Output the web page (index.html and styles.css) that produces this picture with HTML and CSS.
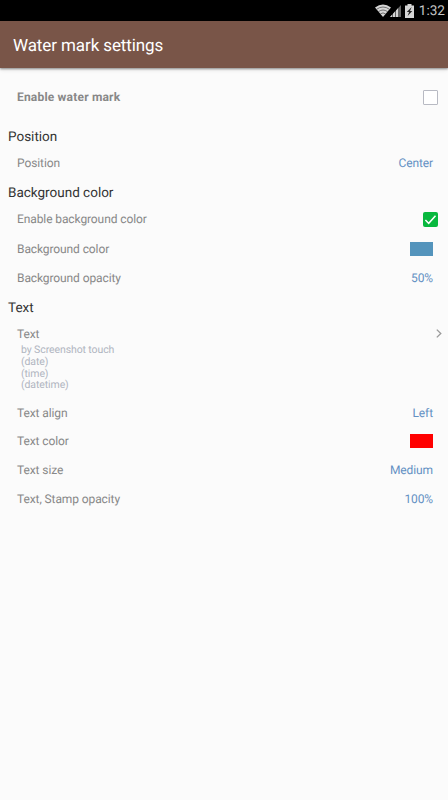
FILE: index.html
```html
<!DOCTYPE html>
<html lang="en">
<head>
<meta charset="utf-8">
<title>Water mark settings</title>
<link rel="stylesheet" href="styles.css">
</head>
<body>
<div class="status">
  <svg class="wifi" width="16" height="13" viewBox="0 0 16 13"><path d="M0 3.6Q8-2.8 16 3.6L8 13Z" fill="#d6d6d6"/><path d="M1.4 5.4Q8 .6 14.6 5.4M3.4 7.7Q8 4.3 12.6 7.7M5.4 9.9Q8 7.9 10.6 9.9" fill="none" stroke="#444" stroke-width=".7"/></svg>
  <svg class="signal" width="11" height="12" viewBox="0 0 11 12"><path d="M0 12L11 0V12Z" fill="#666"/><path d="M0 12L2 9.8V12ZM3 12V8.7L5 6.5V12ZM6 12V5.5L8 3.3V12Z" fill="#d6d6d6"/></svg>
  <svg class="battery" width="9" height="14" viewBox="0 0 9 14"><path d="M2.5 0h4v1.5H9V14H0V1.5h2.5Z" fill="#d6d6d6"/><path d="M6.7 3L1.8 8h2.3L2.6 12 7.3 7H5Z" fill="#222"/></svg>
  <span class="clock">1:32</span>
</div>
<header class="bar"><h1>Water mark settings</h1></header>
<main>
  <div class="row master"><span class="label">Enable water mark</span><span class="check"></span></div>
  <h2 class="first">Position</h2>
  <div class="row tall"><span class="label">Position</span><span class="value">Center</span></div>
  <h2>Background color</h2>
  <div class="row short"><span class="label">Enable background color</span><span class="check on"><svg width="15" height="15" viewBox="0 0 15 15"><path d="M2.4 8L5.7 11.3L12.5 3.7" fill="none" stroke="#fff" stroke-width="1.5"/></svg></span></div>
  <div class="row tall"><span class="label">Background color</span><span class="swatch blue"></span></div>
  <div class="row opacity"><span class="label">Background opacity</span><span class="value">50%</span></div>
  <h2 class="text-head">Text</h2>
  <div class="row text-row"><span class="label">Text</span><svg class="chevron" width="6" height="9" viewBox="0 0 6 9"><path d="M.8.6L4.8 4.5L.8 8.4" fill="none" stroke="#999" stroke-width="1.3"/></svg></div>
  <div class="detail"><div>by Screenshot touch</div><div>(date)</div><div>(time)</div><div>(datetime)</div></div>
  <div class="row"><span class="label">Text align</span><span class="value">Left</span></div>
  <div class="row"><span class="label">Text color</span><span class="swatch red"></span></div>
  <div class="row"><span class="label">Text size</span><span class="value">Medium</span></div>
  <div class="row"><span class="label">Text, Stamp opacity</span><span class="value">100%</span></div>
</main>
</body>
</html>
```
FILE: styles.css
```css
* { box-sizing: border-box; }
body { margin: 0; height: 800px; overflow: hidden; background: #fbfbfb; font-family: Roboto, sans-serif; text-rendering: geometricPrecision; }
.status { height: 21px; background: #000; display: flex; align-items: center; justify-content: flex-end; padding-right: 3px; }
.signal { margin: 1px 0 0 -1px; }
.battery { margin: 0 5px 0 4px; }
.clock { color: #c6c6c6; font-size: 13.6px; line-height: 20px; padding-top: 1px; }
.bar { height: 47px; background: #795548; display: flex; align-items: center; padding: 2px 13px 0; box-shadow: 0 1px 2px rgba(0,0,0,.4), 0 2px 4px rgba(0,0,0,.1); }
h1 { margin: 0; color: #fff; font-size: 17px; font-weight: 400; letter-spacing: -.1px; }
h2 { margin: 0; padding: 1px 0 0 8px; height: 28px; display: flex; align-items: center; color: #333; font-size: 13.5px; font-weight: 400; }
h2.first { height: 21px; padding-top: 0; }
h2.text-head { height: 30px; padding-top: 0; }
.row { height: 28.8px; display: flex; align-items: center; justify-content: space-between; padding: 0 15px 0 17px; font-size: 12px; letter-spacing: -.1px; color: #888; }
.row.master { height: 58px; font-weight: 700; letter-spacing: .19px; }
.row.tall { height: 31px; }
.row.short { height: 27px; padding-bottom: 1px; }
.row.opacity { height: 29px; padding-bottom: 1px; }
.row.text-row { height: 21px; }
.value { color: #6390c3; }
.check { width: 15px; height: 15px; margin-right: -5px; border: 1px solid #b8bac3; border-radius: 1px; background: #fff; }
.check.on { border: 0; border-radius: 2px; background: #08b83e; }
.check svg { display: block; }
.swatch { width: 23px; height: 14px; }
.blue { background: #5494bc; }
.red { background: #f00; }
.chevron { margin-right: -9px; }
.detail { height: 54.3px; padding: .3px 0 0 21px; font-size: 10.5px; line-height: 11.7px; letter-spacing: -.1px; color: #b0b5c0; }
```
